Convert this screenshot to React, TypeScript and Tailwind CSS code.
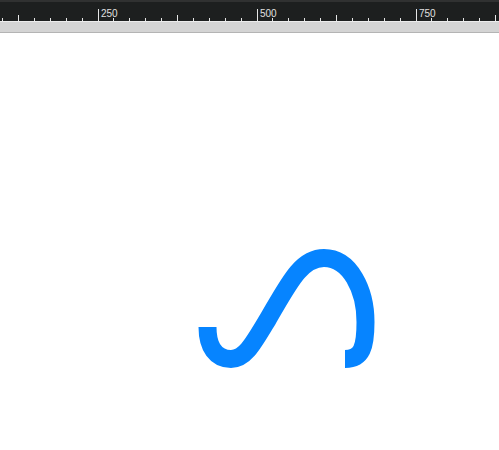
const ticks = Array.from({ length: 32 }, (_, k) => k);

function Ruler() {
  return (
    <div className="h-[21px] bg-[#1d1f1f] border-t-2 border-[#303131]">
      <svg width="499" height="19" viewBox="0 2 499 19" className="block">
        {ticks.map((k) => {
          const x = Math.floor(2.6 + 15.9 * k);
          const major = (k - 6) % 10 === 0;
          const medium = (k - 1) % 10 === 0;
          const top = major ? 9 : medium ? 15 : 18;
          return (
            <g key={k}>
              <rect x={x} y={top} width="1" height={21 - top} fill="#e6e6e6" />
              {major && (
                <text
                  x={x + 3}
                  y="16.5"
                  fill="#e0e0e0"
                  fontSize="10"
                  fontFamily="'Liberation Sans', Arial, sans-serif"
                >
                  {250 + ((k - 6) / 10) * 250}
                </text>
              )}
            </g>
          );
        })}
      </svg>
    </div>
  );
}

export default function App() {
  return (
    <div className="w-[499px] h-[450px] bg-white overflow-hidden flex flex-col">
      <Ruler />
      <div className="h-[12px] bg-[#d4d4d4] border-t border-[#ececec] border-b border-b-[#b4b4b4]" />
      <div className="flex-1">
        <svg width="499" height="417" viewBox="0 33 499 417" className="block">
          <defs>
            <clipPath id="canvas">
              <rect x="0" y="33" width="499" height="335" />
            </clipPath>
          </defs>
          <path
            clipPath="url(#canvas)"
            d="M207.5 327 C207.5 347 216 359 231 359 C245 359 253 344 268 319 C289 283 301 258 324 258 C350 258 365.5 290 365.5 322 C365.5 347 362 359 345 359"
            fill="none"
            stroke="#0684ff"
            strokeWidth="18"
          />
        </svg>
      </div>
    </div>
  );
}
